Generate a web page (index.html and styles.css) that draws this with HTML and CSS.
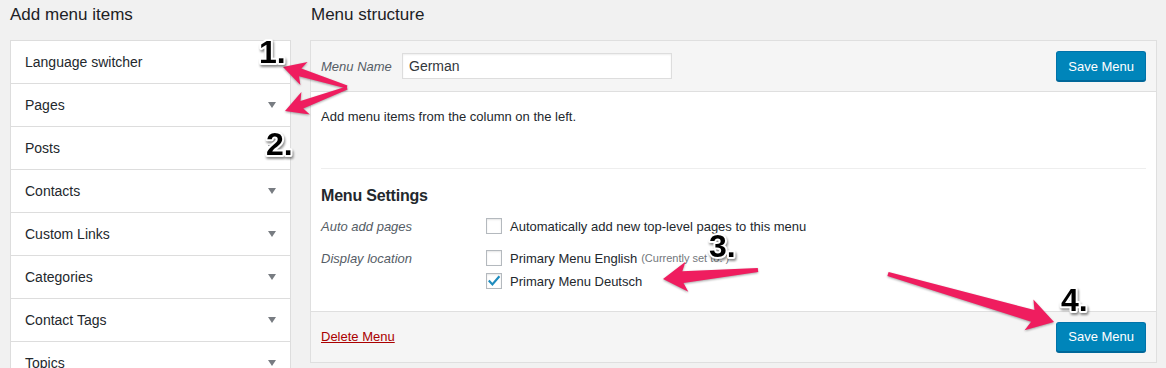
FILE: index.html
```html
<!DOCTYPE html>
<html lang="en">
<head>
    <meta charset="UTF-8">
    <meta name="viewport" content="width=device-width, initial-scale=1.0">
    <title>Menus</title>
    <link rel="stylesheet" href="styles.css">
</head>
<body>

    <div class="wrap">
        <div class="column_left">
            <h2 class="col_title">Add menu items</h2>
            <div class="accordion">
                <div class="acc_item">Language switcher <span class="acc_arrow"></span></div>
                <div class="acc_item">Pages <span class="acc_arrow"></span></div>
                <div class="acc_item">Posts <span class="acc_arrow"></span></div>
                <div class="acc_item">Contacts <span class="acc_arrow"></span></div>
                <div class="acc_item">Custom Links <span class="acc_arrow"></span></div>
                <div class="acc_item">Categories <span class="acc_arrow"></span></div>
                <div class="acc_item">Contact Tags <span class="acc_arrow"></span></div>
                <div class="acc_item">Topics <span class="acc_arrow"></span></div>
            </div>
        </div>

        <div class="column_right">
            <h2 class="col_title">Menu structure</h2>
            <div class="menu_box">
                <div class="menu_header">
                    <label class="menu_name_label" for="menuName">Menu Name</label>
                    <input class="menu_name_input" type="text" id="menuName" value="German">
                    <button class="save_button">Save Menu</button>
                </div>

                <div class="menu_body">
                    <p class="instructions">Add menu items from the column on the left.</p>

                    <div class="menu_settings">
                        <h3>Menu Settings</h3>

                        <div class="setting_row">
                            <span class="setting_label">Auto add pages</span>
                            <div class="setting_options">
                                <div class="option"><span class="checkbox"></span>Automatically add new top-level pages to this menu</div>
                            </div>
                        </div>

                        <div class="setting_row">
                            <span class="setting_label">Display location</span>
                            <div class="setting_options">
                                <div class="option"><span class="checkbox"></span>Primary Menu English <span class="theme_location">(Currently set to: )</span></div>
                                <div class="option">
                                    <span class="checkbox">
                                        <svg width="14" height="14" viewBox="0 0 14 14"><path d="M1.8 6.6 L5.4 10.4 L12.4 2.2" fill="none" stroke="#1e8cbe" stroke-width="2.2"/></svg>
                                    </span>Primary Menu Deutsch
                                </div>
                            </div>
                        </div>
                    </div>
                </div>

                <div class="menu_footer">
                    <a href="#" class="delete_link">Delete Menu</a>
                    <button class="save_button">Save Menu</button>
                </div>
            </div>
        </div>
    </div>

    <!-- tutorial annotations -->
    <svg class="annotations" width="1166" height="368" viewBox="0 0 1166 368">
        <g class="arrows">
            <polygon points="347.4,85.6 301.4,68.5 307.6,62.1 283,67 300.4,85.0 299.0,76.2 346.6,88.4"/>
            <polygon points="346.5,86.6 300.5,101.0 301.4,92.1 285,111 309.8,114.6 303.3,108.5 347.5,89.4"/>
            <polygon points="757.8,268.0 682.3,271.2 685.5,261.8 663,279 688.3,291.7 683.5,283.1 758.2,272.0"/>
            <polygon points="887.4,275.9 1031.1,321.7 1024.6,330.2 1054,322 1033.4,299.4 1034.5,310.1 888.6,272.1"/>
        </g>
        <g class="steps">
            <text x="259" y="63">1.</text>
            <text x="266" y="155">2.</text>
            <text x="709" y="257">3.</text>
            <text x="1061" y="311">4.</text>
        </g>
    </svg>

</body>
</html>
```

FILE: styles.css
```css
body {
    margin: 0;
    height: 368px;
    overflow: hidden;
    position: relative;
    background-color: #f1f1f1;
    font-family: 'Liberation Sans', Arial, sans-serif;
    font-size: 13px;
    color: #23282d;
}

.wrap {
    display: flex;
    gap: 19px;
    padding: 0 9px 0 10px;
}

.column_left {
    width: 281px;
    flex-shrink: 0;
}

.column_right {
    flex: 1;
}

.col_title {
    margin: 0;
    height: 40px;
    font-size: 17px;
    font-weight: 400;
    line-height: 30px;
    color: #1d2125;
}

.column_right .col_title {
    padding-left: 1px;
}

/* left accordion */
.accordion {
    background-color: #fff;
    border: 1px solid #ddd;
}

.acc_item {
    height: 42px;
    display: flex;
    align-items: center;
    justify-content: space-between;
    padding: 0 14px;
    border-bottom: 1px solid #ddd;
    font-size: 14px;
}

.acc_arrow {
    width: 0;
    height: 0;
    border-left: 4px solid transparent;
    border-right: 4px solid transparent;
    border-top: 6px solid #787c82;
}

/* menu box */
.menu_box {
    border: 1px solid #dfdfdf;
    background-color: #fff;
}

.menu_header,
.menu_footer {
    height: 50px;
    display: flex;
    align-items: center;
    padding: 0 10px;
    background-color: #f5f5f5;
}

.menu_header {
    border-bottom: 1px solid #dfdfdf;
}

.menu_footer {
    border-top: 1px solid #dfdfdf;
    justify-content: space-between;
}

.menu_name_label {
    width: 81px;
    font-style: italic;
    color: #555d66;
}

.menu_name_input {
    width: 270px;
    height: 26px;
    box-sizing: border-box;
    margin: 0;
    padding: 0 6px;
    border: 1px solid #ddd;
    box-shadow: inset 0 1px 2px rgba(0, 0, 0, 0.07);
    font-family: inherit;
    font-size: 14px;
    color: #32373c;
}

.save_button {
    margin-left: auto;
    height: 30px;
    padding: 0 11px;
    background-color: #0085ba;
    border: 1px solid #0073aa;
    border-bottom-color: #006799;
    border-radius: 3px;
    box-shadow: 0 1px 0 #006799;
    color: #fff;
    font-family: inherit;
    font-size: 13px;
    cursor: pointer;
}

.menu_body {
    padding: 15px 10px 18px;
}

.instructions {
    margin: 0;
    line-height: 19.5px;
}

.menu_settings {
    margin-top: 41px;
    border-top: 1px solid #eee;
}

.menu_settings h3 {
    margin: 15px 0 7px;
    font-size: 16px;
    font-weight: 700;
    letter-spacing: -0.2px;
    line-height: 24px;
}

.setting_row {
    display: flex;
}

.setting_row + .setting_row {
    margin-top: 9px;
}

.setting_label {
    width: 165px;
    flex-shrink: 0;
    line-height: 23px;
    font-style: italic;
    color: #555d66;
}

.option {
    display: flex;
    align-items: center;
    height: 23px;
}

.checkbox {
    width: 16px;
    height: 16px;
    box-sizing: border-box;
    margin-right: 8px;
    border: 1px solid #b4b9be;
    background-color: #fff;
    box-shadow: inset 0 1px 2px rgba(0, 0, 0, 0.1);
    display: flex;
    align-items: center;
    justify-content: center;
}

.theme_location {
    margin-left: 4px;
    font-size: 11px;
    color: #72777c;
}

.delete_link {
    color: #a00;
    text-decoration: underline;
}

/* annotations drawn over the page */
.annotations {
    position: absolute;
    top: 0;
    left: 0;
    pointer-events: none;
}

.arrows polygon {
    fill: #ef1d5f;
    filter: drop-shadow(0 1px 1px rgba(0, 0, 0, 0.35));
}

.steps text {
    font-family: 'Liberation Sans', Arial, sans-serif;
    font-size: 32px;
    font-weight: 700;
    fill: #000;
    stroke: #fff;
    stroke-width: 4px;
    stroke-linejoin: round;
    paint-order: stroke;
    filter: drop-shadow(1px 2px 1px rgba(0, 0, 0, 0.45));
}
```
